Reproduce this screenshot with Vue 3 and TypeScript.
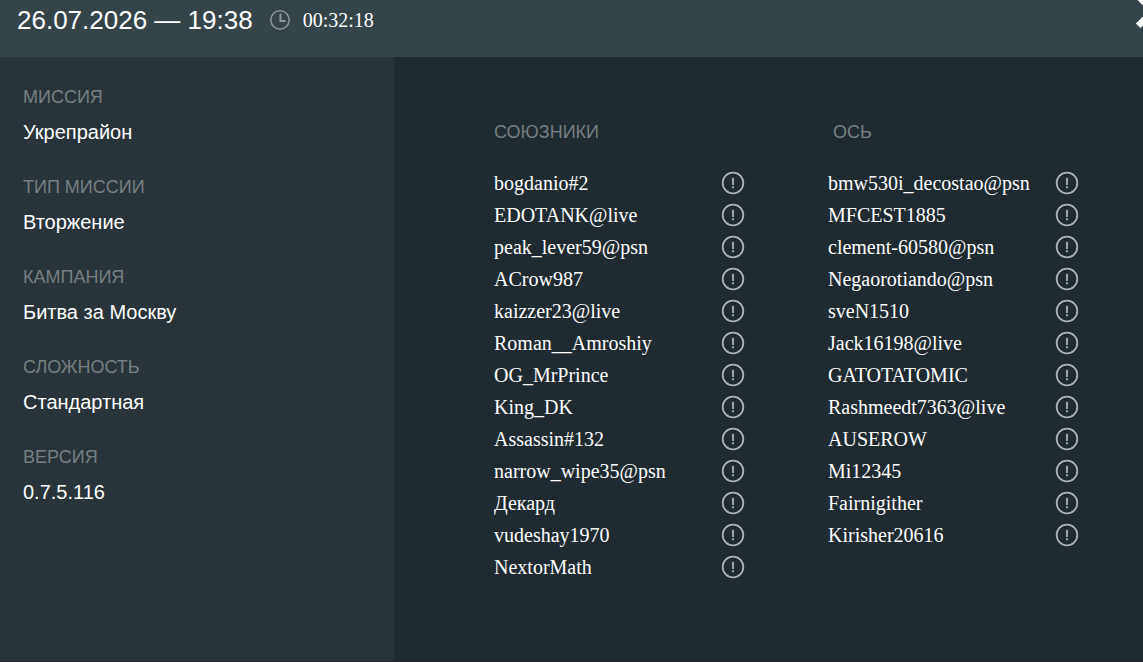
<script setup lang="ts">
interface Detail { label: string; value: string }
interface Team { name: string; indented: boolean; players: string[] }

const details: Detail[] = [
  { label: 'Миссия', value: 'Укрепрайон' },
  { label: 'Тип миссии', value: 'Вторжение' },
  { label: 'Кампания', value: 'Битва за Москву' },
  { label: 'Сложность', value: 'Стандартная' },
  { label: 'Версия', value: '0.7.5.116' },
]

const teams: Team[] = [
  {
    name: 'Союзники',
    indented: false,
    players: ['bogdanio#2', 'EDOTANK@live', 'peak_lever59@psn', 'ACrow987', 'kaizzer23@live', 'Roman__Amroshiy', 'OG_MrPrince', 'King_DK', 'Assassin#132', 'narrow_wipe35@psn', 'Декард', 'vudeshay1970', 'NextorMath'],
  },
  {
    name: 'Ось',
    indented: true,
    players: ['bmw530i_decostao@psn', 'MFCEST1885', 'clement-60580@psn', 'Negaorotiando@psn', 'sveN1510', 'Jack16198@live', 'GATOTATOMIC', 'Rashmeedt7363@live', 'AUSEROW', 'Mi12345', 'Fairnigither', 'Kirisher20616'],
  },
]
</script>

<template>
  <div class="replay">
    <header class="header">
      <h1 class="date">26.07.2026 — 19:38</h1>
      <svg class="clock" viewBox="0 0 20 20" aria-hidden="true">
        <circle cx="10" cy="10" r="9.2" fill="none" stroke="currentColor" stroke-width="1.6" />
        <path d="M10.5 3.5V11H15.5" fill="none" stroke="currentColor" stroke-width="2" />
      </svg>
      <span class="duration">00:32:18</span>
      <button class="close" type="button" aria-label="Закрыть">
        <svg viewBox="0 0 36 36" aria-hidden="true">
          <path d="M3.2 3.2L32.8 32.8M32.8 3.2L3.2 32.8" stroke="currentColor" stroke-width="6.4" />
        </svg>
      </button>
    </header>
    <div class="body">
      <aside class="sidebar">
        <dl class="details">
          <div v-for="item in details" :key="item.label" class="detail">
            <dt class="label">{{ item.label }}</dt>
            <dd class="value">{{ item.value }}</dd>
          </div>
        </dl>
      </aside>
      <main class="teams">
        <section v-for="team in teams" :key="team.name" class="team">
          <h2 class="label team-name" :class="{ indented: team.indented }">{{ team.name }}</h2>
          <ul class="players">
            <li v-for="player in team.players" :key="player" class="player">
              <span>{{ player }}</span>
              <button class="report" type="button" :aria-label="'Пожаловаться: ' + player">
                <svg viewBox="0 0 24 24" aria-hidden="true">
                  <circle cx="12" cy="12" r="10.3" fill="none" stroke="currentColor" stroke-width="1.8" />
                  <path d="M12 6.8V14M12 15.3V17.3" fill="none" stroke="currentColor" stroke-width="1.8" />
                </svg>
              </button>
            </li>
          </ul>
        </section>
      </main>
    </div>
  </div>
</template>

<style>
body {
  margin: 0;
  background: #1f2b30;
}
</style>

<style scoped>
.replay {
  display: flex;
  flex-direction: column;
  min-height: 100vh;
  box-sizing: border-box;
  border-bottom: 1px solid #25252e;
  color: #fff;
  background: #1f2b30;
  font-family: "Liberation Serif", "Times New Roman", serif;
  font-size: 20px;
  line-height: 24px;
}
.header {
  position: relative;
  display: flex;
  align-items: flex-start;
  height: 49px;
  padding: 8px 17px 0;
  overflow: hidden;
  background: #354449;
}
.date {
  margin: 0;
  font: 400 26px/24px "Liberation Sans", Arial, sans-serif;
}
.clock {
  width: 20px;
  height: 20px;
  margin: 2px 13px 0 17px;
  color: #8c9497;
}
.duration {
  line-height: 25px;
}
.close {
  position: absolute;
  top: -7px;
  right: -28px;
  width: 36px;
  height: 36px;
  padding: 0;
  border: 0;
  color: #fff;
  background: none;
}
.close svg,
.report svg {
  display: block;
  width: 100%;
  height: 100%;
}
.body {
  display: flex;
  flex: 1;
}
.sidebar {
  flex: 0 0 394px;
  box-sizing: border-box;
  padding: 28px 23px;
  background: #283439;
}
.details {
  display: flex;
  flex-direction: column;
  gap: 31px;
  margin: 0;
}
.detail {
  display: flex;
  flex-direction: column;
  gap: 11px;
}
.label {
  margin: 0;
  color: #777f82;
  font: 400 18px/24px "Liberation Sans", Arial, sans-serif;
  text-transform: uppercase;
}
.value {
  margin: 0;
  font-family: "Liberation Sans", Arial, sans-serif;
}
.teams {
  display: flex;
  flex: 1;
  align-items: flex-start;
  gap: 83px;
  padding: 63px 64px 63px 100px;
}
.team {
  flex: 1;
}
.team-name {
  margin-bottom: 23px;
}
.indented {
  padding-left: 5px;
}
.players {
  margin: 0;
  padding: 0;
  list-style: none;
}
.player {
  display: flex;
  align-items: center;
  justify-content: space-between;
  height: 32px;
}
.report {
  width: 24px;
  height: 24px;
  padding: 0;
  border: 0;
  border-radius: 50%;
  color: #adb2b4;
  background: none;
}
</style>
